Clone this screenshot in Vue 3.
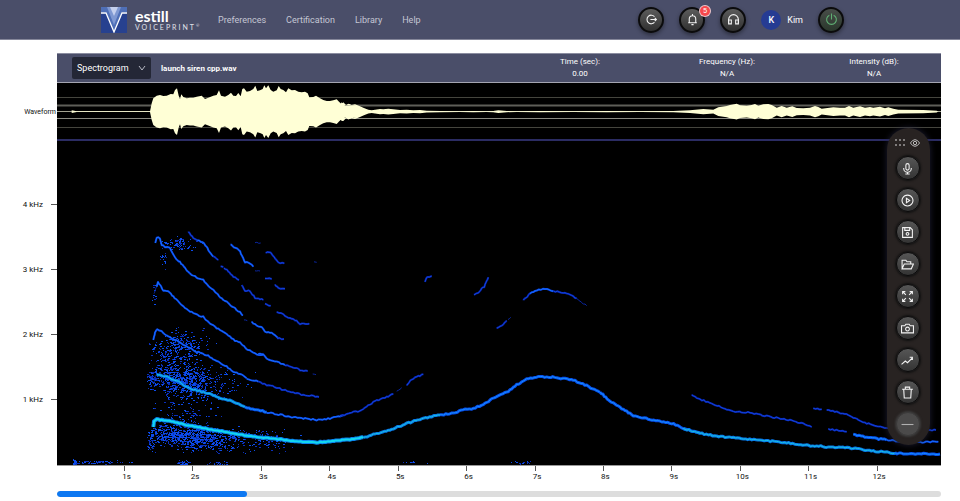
<script setup>
import { ref } from 'vue'

const view = ref('Spectrogram')
const navLinks = ['Preferences', 'Certification', 'Library', 'Help']
const readouts = [
  { label: 'Time (sec):', value: '0.00' },
  { label: 'Frequency (Hz):', value: 'N/A' },
  { label: 'Intensity (dB):', value: 'N/A' }
]
const frequencies = [4, 3, 2, 1]
const seconds = Array.from({ length: 12 }, (_, i) => i + 1)

const headerTools = [
  { name: 'Sign in', paths: ['M17.500 6.500A8 8 0 1 0 17.500 17.500', 'M10 12h11M18 9l3 3-3 3'] },
  { name: 'Notifications', badge: 5, paths: ['M6 18V11a6 6 0 0 1 12 0v7M4 18h16M12 5V2M10 21.500h4'] },
  { name: 'Support', paths: ['M3 19v-7a9 9 0 0 1 18 0v7', 'M3 13h5v7H3zM16 13h5v7h-5z'] }
]

const tools = [
  { name: 'Record', paths: ['M9 6a3 3 0 0 1 6 0v6a3 3 0 0 1-6 0z', 'M5 11v1a7 7 0 0 0 14 0v-1M12 19v3M8 22h8'] },
  { name: 'Play', paths: ['M12 2a10 10 0 1 0 .01 0z', 'M10 8v8l6-4z'] },
  { name: 'Save', paths: ['M3 3h14l4 4v14H3zM7 3v5h9V3', 'M12 12a2.500 2.500 0 1 0 .01 0z'] },
  { name: 'Open', paths: ['M2 20V4h7l2 3h7v4M2 20l4-9h17l-4 9z'] },
  { name: 'Fit to view', paths: ['M3 8V3h5M3 3l6 6M16 3h5v5M21 3l-6 6M3 16v5h5M3 21l6-6M21 16v5h-5M21 21l-6-6'] },
  { name: 'Snapshot', paths: ['M1 7h6l2-3h6l2 3h6v13H1z', 'M12 9.500a3.500 3.500 0 1 0 .01 0z'] },
  { name: 'Trend', paths: ['M1 19l7-6 4 3 9-9M16 6h5v5'] },
  { name: 'Delete', paths: ['M2 6h20M8 6V2h8v4M5 6l1 16h12l1-16'] },
  { name: 'Collapse', muted: true, paths: ['M1 12h22'] }
]

// Seeded generator keeps the texture identical on every render.
function seeded(seed) {
  let s = seed
  return () => {
    s = (s * 1664525 + 1013904223) % 4294967296
    return s / 4294967296
  }
}
const rand = seeded(77)

// Points are stored in thirds of a unit, relative to an origin.
function scalePoints(ox, oy, text) {
  return text.split(' ').map((p) => {
    const [x, y] = p.split(',').map(Number)
    return [ox + x / 3, oy + y / 3]
  })
}

function roughen(points, amount) {
  const out = []
  for (let i = 0; i < points.length - 1; i++) {
    const [x1, y1] = points[i]
    const [x2, y2] = points[i + 1]
    const steps = Math.max(1, Math.round(Math.hypot(x2 - x1, y2 - y1) / 2))
    for (let k = 0; k < steps; k++) {
      const t = k / steps
      out.push([x1 + (x2 - x1) * t, y1 + (y2 - y1) * t + (rand() - 0.5) * amount])
    }
  }
  out.push(points[points.length - 1])
  return out.map(([x, y]) => x.toFixed(1) + ',' + y.toFixed(1)).join(' ')
}

const A = [140, 225]
const B = [130, 330]
const C = [340, 260]
const D = [600, 340]
const partials = [
  ['mid', A, '46,55 50,38 55,36 60,42 65,60 75,66 88,66 95,80 105,97 120,112 135,130 150,145 170,158 190,165 205,182 225,200 245,220 265,235 285,250 300,262 308,272'],
  ['mid', A, '335,290 350,302 365,305 375,320 390,322 405,330 415,340'],
  ['low', A, '412,340 432,342'],
  ['low', A, '145,22 160,38 172,46'],
  ['mid', A, '172,46 188,50 200,65 208,80 220,95'],
  ['low', A, '220,95 235,105'],
  ['low', A, '242,122 250,126'],
  ['low', A, '252,128 265,138 280,155 297,165'],
  ['low', A, '305,180 315,198 330,198 345,218 355,220 370,225'],
  ['low', A, '375,238 392,242'],
  ['low', A, '410,262 430,268 450,280 465,285 480,296 508,296'],
  ['mid', A, '272,57 285,70 298,75 305,90 315,112 330,115 340,125'],
  ['faint', A, '345,137 360,138'],
  ['low', A, '375,160 395,162'],
  ['low', A, '405,178 415,190 435,191'],
  ['faint', A, '345,52 362,54'],
  ['low', A, '377,82 392,83 402,95 415,114 433,115'],
  ['faint', A, '522,112 530,112'],
  ['faint', A, '312,286 322,287'],
  ['faint', A, '42,205 50,185'],
  ['mid', A, '50,185 54,170 60,180 70,195 85,197 100,215 120,235 140,252 160,265 190,276 210,295 235,312 260,328 285,347 300,352 320,372 350,387 370,389'],
  ['mid', B, '385,72 400,75 415,88 440,95 465,105'],
  ['low', B, '465,105 490,112 510,120 533,123'],
  ['faint', B, '548,133 558,134'],
  ['mid', B, '70,30 75,8 82,-3 88,0 95,5 110,15 130,27 150,38 175,52 200,65 230,75 260,93 290,110 310,125 330,132 350,145'],
  ['mid', B, '350,145 385,155'],
  ['low', B, '385,155 410,165 440,172 460,180 490,187 520,195 545,198 567,201'],
  ['faint', B, '72,160 75,140 82,132'],
  ['high', B, '80,132 95,135 120,145 145,155 165,170 190,178 215,185 240,190 270,205 300,212 325,222 345,231'],
  ['strong', B, '345,231 385,240 410,247'],
  ['mid', B, '410,247 440,252 480,260 520,265 560,270 600,265 625,260 640,256'],
  ['low', C, '0,467 20,463 35,456 60,453 85,435 110,422 135,413 160,402'],
  ['faint', C, '170,392 185,383'],
  ['low', C, '200,374 215,358 230,350 250,343'],
  ['peak', B, '70,290 72,275 80,268 95,270 130,275 170,285 210,292 250,300 300,308 350,317 400,323 450,328 500,334 560,337 600,334 660,328 700,322'],
  ['high', C, '70,533 100,523 150,510 200,490 250,475 300,465'],
  ['strong', C, '300,465 340,459 370,450 400,445 430,435 460,413 500,397 530,375 560,358 590,351 620,350 650,353 700,360 740,377 780,397'],
  ['strong', D, '0,157 30,182 60,202 100,226 150,238 215,250 250,265 300,280'],
  ['high', D, '250,265 300,280 350,288 400,294 480,300 560,308 620,316 680,320 760,325 820,333 890,340'],
  ['strong', D, '885,340 940,341 1020,342'],
  ['low', C, '255,65 262,50 275,48'],
  ['low', C, '402,104 415,100 425,85 433,80 445,52'],
  ['low', C, '470,205 490,195 500,182'],
  ['faint', C, '504,178 512,172'],
  ['low', C, '550,122 570,100'],
  ['mid', C, '570,100 590,90 615,87 640,94'],
  ['low', C, '640,94 670,97 690,105 710,115'],
  ['faint', C, '710,115 725,127 740,137'],
  ['low', D, '275,166 300,178 340,192 380,207 400,214 450,218 500,228 570,241 610,252 635,261'],
  ['low', D, '640,206 665,208'],
  ['low', D, '680,210 740,223 770,238 800,250 860,264'],
  ['low', D, '860,264 900,270 1008,270'],
  ['low', D, '685,267 740,275'],
  ['strong', D, '760,284 800,292 860,300'],
  ['mid', D, '860,300 900,305 960,307 1015,305']
].map(([level, origin, text]) => ({
  level,
  points: roughen(scalePoints(origin[0], origin[1], text), level === 'peak' ? 0.8 : 1.4)
}))

// Scattered breath noise: [centre x, centre y, spread x, spread y, count, left limit]
const clouds = [
  [178, 435, 24, 7, 520, 148],
  [208, 440, 26, 7, 400, 148],
  [180, 380, 20, 10, 520, 149],
  [200, 385, 27, 10, 200, 149],
  [174, 354, 17, 11, 230, 149],
  [182, 342, 16, 8, 120, 153],
  [182, 412, 24, 12, 110, 152],
  [151, 441, 3, 7, 40, 145],
  [152, 379, 4, 6, 60, 147],
  [179, 244, 12, 4, 90, 160],
  [163, 258, 2, 7, 16, 160],
  [154, 294, 1, 6, 12, 152],
  [184, 463, 5, 2, 34, 176],
  [218, 463, 8, 1, 22, 200],
  [96, 462, 20, 1, 54, 74],
  [74, 462, 1, 2, 34, 72],
  [410, 462, 9, 1, 9, 400],
  [520, 462, 12, 1, 12, 506],
  [262, 439, 20, 7, 110, 210]
]
const bell = () => (rand() + rand() + rand() - 1.5) * 1.5
const speckles = { dim: '', lit: '' }
clouds.forEach(([cx, cy, sx, sy, n, left]) => {
  for (let i = 0; i < n; i++) {
    const x = Math.round(cx + bell() * sx)
    const y = Math.round(Math.min(464, cy + bell() * sy))
    if (x < left) continue
    const key = rand() > 0.5 ? 'dim' : 'lit'
    const w = rand() > 0.6 ? 2 : 1
    speckles[key] += `M${x} ${y}h${w}v1h-${w}z`
  }
})

const envelope = [
  ...scalePoints(40, 75, '95,106 110,109 330,109 335,85 340,70 350,62 360,60 370,63 380,62 392,57 400,58 405,45 411,40 416,62 420,72 424,58 430,66 440,70 450,68 460,68 470,65 485,62 495,72 505,68 520,62 530,60 537,46 543,62 555,65 565,60 573,53 580,62 588,63 595,54 602,64 607,42 612,40 620,50 630,48 640,42 646,32 652,48 660,46 668,42 673,31 678,40 685,31 692,45 700,50 710,46 716,33 722,42 730,45 738,52 745,40 755,46 765,45 775,50 785,52 795,50 803,55 808,67 820,66 828,62 840,70 850,75 860,78 870,78 880,76 890,73 897,80 905,88 910,82 918,90 930,88 940,92 950,92'),
  ...scalePoints(340, 75, '0,90 5,82 15,92 25,86 35,90 45,88 60,94 70,98 85,104 95,106 105,104 120,102 130,103 145,101 160,103 180,105 200,104 220,106 240,105 260,107 300,108 360,109 400,108 440,109 460,108 475,106 500,108 530,109 600,108 700,109 800,108 898,109'),
  ...scalePoints(640, 75, '0,109 100,108 150,106 190,102 220,104 235,97 260,93 270,90 290,86 300,91 320,92 335,90 345,87 355,92 370,88 385,87 395,90 410,98 425,93 440,98 457,94 470,99 490,100 510,98 525,93 535,96 545,101 580,97 600,98 615,98 627,93 640,98 660,94 675,98 690,96 700,98 720,95 735,100 745,97 760,101 775,104 850,105 890,107 895,110')
]
const middle = 111.6
const waveform = [
  ...envelope,
  ...envelope.slice().reverse().map(([x, y]) => [x, 2 * middle - y])
].map(([x, y]) => x.toFixed(1) + ',' + y.toFixed(1)).join(' ')
</script>

<template>
  <div class="page">
    <header class="topbar">
      <a class="brand" href="#">
        <svg class="mark" viewBox="0 0 26 26" aria-hidden="true">
          <rect width="26" height="26" fill="#27418f" />
          <path d="M0 0h26v5h-5L13 25 5 5H0z" fill="#4f6fb7" />
          <path d="M6 0h14l-7 18z" fill="#7f98d2" />
          <path d="M9 0h8l-4 9z" fill="#c5d0ee" />
          <path d="M0 6h5l8 19 8-19h5" fill="none" stroke="#fff" stroke-width="1.300" />
        </svg>
        <span class="wordmark">
          <span class="name">estill</span>
          <span class="product">VOICEPRINT<span class="mark-sign">®</span></span>
        </span>
      </a>
      <nav class="nav">
        <a v-for="link in navLinks" :key="link" href="#">{{ link }}</a>
      </nav>
      <div class="actions">
        <button v-for="tool in headerTools" :key="tool.name" class="knob" type="button" :aria-label="tool.name">
          <svg class="glyph" viewBox="0 0 24 24"><path v-for="d in tool.paths" :key="d" :d="d" /></svg>
          <span v-if="tool.badge" class="badge">{{ tool.badge }}</span>
        </button>
        <a class="user" href="#"><span class="avatar">K</span>Kim</a>
        <button class="knob power" type="button" aria-label="Power">
          <svg class="glyph" viewBox="0 0 24 24"><path d="M8 4a9 9 0 1 0 8 0M12 1v11" /></svg>
        </button>
      </div>
    </header>

    <main class="workspace">
      <div class="scale">
        <div class="wave-label">Waveform</div>
        <div v-for="f in frequencies" :key="f" class="frequency">{{ f }} kHz</div>
      </div>

      <section class="panel">
        <div class="infobar">
          <div class="picker">
            <select v-model="view" aria-label="View">
              <option>Spectrogram</option>
              <option>Waveform</option>
            </select>
            <svg class="chevron" viewBox="0 0 8 8" aria-hidden="true"><path d="M1 2l3 4 3-4" /></svg>
          </div>
          <strong class="file">launch siren cpp.wav</strong>
          <dl class="readouts">
            <div v-for="r in readouts" :key="r.label">
              <dt>{{ r.label }}</dt>
              <dd>{{ r.value }}</dd>
            </div>
          </dl>
        </div>

        <div class="plot">
          <svg class="canvas" viewBox="57 83 884 382" preserveAspectRatio="none" role="img" aria-label="Waveform and spectrogram">
            <g class="guides">
              <path d="M57 97.500H941M57 127.500H941" stroke="#45453e" />
              <path d="M57 105.500H941" stroke="#5e5e58" stroke-width="2" />
              <path d="M57 118.500H941" stroke="#8a8a82" />
              <path d="M57 111.500H941" stroke="#a3a391" />
              <path d="M57 140H941" stroke="#2b2c63" stroke-width="2" />
            </g>
            <polygon :points="waveform" fill="#ffffd6" />
            <path :d="speckles.dim" fill="#0a2fba" />
            <path :d="speckles.lit" fill="#0c4cea" />
            <g v-for="(p, i) in partials" :key="i" :class="['partial', p.level]">
              <polyline class="halo" :points="p.points" />
              <polyline class="core" :points="p.points" />
            </g>
          </svg>

          <div class="palette" role="toolbar" aria-label="Recording tools">
            <div class="palette-head">
              <svg class="grip" viewBox="0 0 11 8" aria-hidden="true">
                <path d="M0 1h2M4 1h2M8 1h2M0 6h2M4 6h2M8 6h2" />
              </svg>
              <svg class="eye" viewBox="0 0 24 18" aria-hidden="true">
                <path d="M1 9Q6 1 12 1t11 8q-5 8-11 8T1 9z" /><circle cx="12" cy="9" r="4" />
              </svg>
            </div>
            <button v-for="tool in tools" :key="tool.name" :class="['knob', { muted: tool.muted }]" type="button" :aria-label="tool.name">
              <svg class="glyph" viewBox="0 0 24 24"><path v-for="d in tool.paths" :key="d" :d="d" /></svg>
            </button>
          </div>
        </div>

        <div class="timeline">
          <div v-for="s in seconds" :key="s" class="tick">{{ s }}s</div>
        </div>
        <progress class="position" max="1000" value="215" aria-label="Position"></progress>
      </section>
    </main>
  </div>
</template>

<style>
body {
  background: #fff;
}
</style>

<style scoped>
.page {
  font-family: Roboto, "Liberation Sans", sans-serif;
  font-size: 8px;
  color: #111;
}
a {
  color: inherit;
  text-decoration: none;
}
.topbar {
  display: flex;
  align-items: center;
  height: 39px;
  padding: 0 116px 0 101px;
  background: #4a4e69;
  border-bottom: 1px solid #85879a;
  color: #fff;
}
.brand {
  display: flex;
  align-items: center;
  gap: 8px;
}
.mark {
  width: 26px;
  height: 26px;
}
.wordmark {
  display: flex;
  flex-direction: column;
  width: 63px;
  font-family: Lato, sans-serif;
}
.name {
  font-size: 16px;
  line-height: 15px;
  font-weight: 700;
}
.product {
  display: flex;
  font-size: 7px;
  line-height: 9px;
  letter-spacing: 2px;
  color: #e0e2ea;
}
.mark-sign {
  font-size: 4px;
  line-height: 6px;
  letter-spacing: 0;
}
.nav {
  display: flex;
  gap: 20px;
  margin-left: 20px;
  font-size: 9px;
  color: #c5c7d4;
}
.actions {
  display: flex;
  align-items: center;
  gap: 15px;
  margin-left: auto;
}
.knob {
  position: relative;
  display: grid;
  place-items: center;
  width: 26px;
  height: 26px;
  padding: 0;
  border: 2px solid #0b0b0c;
  border-radius: 50%;
  background: linear-gradient(#5c5c5c, #303030);
  box-shadow: 0 2px 4px rgba(0, 0, 0, 0.4);
  color: #f3f3f3;
}
.glyph {
  width: 13px;
  height: 13px;
  fill: none;
  stroke: currentColor;
  stroke-width: 2;
}
.power {
  background: linear-gradient(#484d49, #2a382c);
  color: #5fae73;
}
.badge {
  position: absolute;
  top: -3px;
  right: -7px;
  width: 10px;
  height: 10px;
  border-radius: 50%;
  background: #f5484d;
  box-shadow: 0 0 0 1px #eec5cb;
  color: #fff;
  font-size: 7px;
  line-height: 10px;
  text-align: center;
}
.user {
  display: flex;
  align-items: center;
  gap: 6px;
  font-size: 9px;
}
.avatar {
  width: 20px;
  border-radius: 50%;
  background: #263c93;
  font-weight: 500;
  line-height: 20px;
  text-align: center;
}
.workspace {
  display: flex;
  padding: 13px 19px 0 0;
}
.scale {
  flex: 0 0 57px;
  padding-top: 51px;
}
.wave-label {
  height: 68px;
  padding-right: 1px;
  font-size: 7px;
  line-height: 16px;
  text-align: right;
}
.frequency {
  display: flex;
  align-items: center;
  justify-content: flex-end;
  gap: 8px;
  height: 65px;
}
.frequency::after {
  content: "";
  width: 6px;
  height: 1px;
  background: #555;
}
.panel {
  flex: 1;
  min-width: 0;
}
.infobar {
  display: flex;
  align-items: center;
  box-sizing: border-box;
  height: 30px;
  padding-left: 15px;
  background: #4a4e69;
  border-top: 1px solid #8b8da0;
  border-bottom: 1px solid #a4a5b2;
  color: #fff;
}
.picker {
  display: grid;
  align-items: center;
  width: 79px;
}
.picker > * {
  grid-area: 1 / 1;
}
.picker select {
  appearance: none;
  width: 100%;
  height: 22px;
  padding: 0 5px;
  border: 0;
  border-radius: 2px;
  background: #242736;
  color: #fff;
  font-family: inherit;
  font-size: 9px;
}
.chevron {
  justify-self: end;
  width: 8px;
  height: 8px;
  margin-right: 5px;
  fill: none;
  stroke: #b7b9c4;
  pointer-events: none;
}
.file {
  margin-left: 10px;
  font-weight: 700;
}
.readouts {
  display: flex;
  gap: 13px;
  margin: 0 0 0 auto;
  line-height: 12px;
  text-align: center;
}
.readouts > div {
  width: 134px;
}
.readouts dd {
  margin: 0;
}
.plot {
  position: relative;
  background: #000;
}
.canvas {
  display: block;
  width: 100%;
  height: 382px;
}
.guides,
.partial {
  fill: none;
}
.partial {
  stroke-linejoin: round;
}
.halo { stroke: #0a2fc4; stroke-width: 2; }
.core { stroke: #0b4df0; stroke-width: 1; }
.faint .halo { stroke: #0a26a0; stroke-width: 1; }
.faint .core { stroke: none; }
.low .halo { stroke: #0720a0; }
.low .core { stroke: #1245e0; }
.mid .halo { stroke: #0a3fe0; }
.mid .core { stroke: #1672ff; }
.strong .halo { stroke: #0750ee; stroke-width: 3; }
.strong .core { stroke: #1791ff; }
.high .halo { stroke: #0878e8; stroke-width: 3; }
.high .core { stroke: #19c4e4; }
.peak .halo { stroke: #0a82ec; stroke-width: 4; }
.peak .core { stroke: #12d8ef; stroke-width: 2; }
.palette {
  position: absolute;
  top: 45px;
  right: 11px;
  display: flex;
  flex-direction: column;
  align-items: center;
  gap: 8px;
  box-sizing: border-box;
  width: 43px;
  padding: 10px 2px 9px 0;
  border-radius: 22px;
  background: #282322;
  box-shadow: 0 0 6px rgba(36, 36, 64, 0.8);
}
.palette .knob {
  width: 24px;
  height: 24px;
  border-width: 1px;
  background: linear-gradient(#565656, #343434);
  box-shadow: 0 0 2px 1px #111;
}
.palette .muted {
  border-color: #3b3a3a;
  background: #4b4a4a;
  box-shadow: 0 0 2px 1px #3b3a3a;
  color: #b0b0b0;
}
.palette-head {
  display: flex;
  align-items: center;
  gap: 4px;
  height: 10px;
  stroke: #d5d5d5;
}
.grip {
  width: 11px;
  height: 8px;
  stroke-width: 1;
}
.eye {
  width: 10px;
  height: 8px;
  fill: none;
  stroke-width: 2;
}
.timeline {
  display: flex;
  height: 25px;
  border-top: 1px solid #999;
}
.timeline::before {
  content: "";
  flex: 0 0 4%;
}
.tick {
  display: flex;
  flex: 0 0 7.74%;
  flex-direction: column;
  align-items: center;
  line-height: 11px;
}
.tick::before {
  content: "";
  width: 1px;
  height: 5px;
  margin-right: 4px;
  background: #555;
}
.position {
  appearance: none;
  display: block;
  width: 100%;
  height: 6px;
  border: 0;
  border-radius: 3px;
  overflow: hidden;
  background: #ddd;
}
.position::-webkit-progress-bar {
  background: #ddd;
}
.position::-webkit-progress-value {
  border-radius: 3px;
  background: #0d78f2;
}
</style>
